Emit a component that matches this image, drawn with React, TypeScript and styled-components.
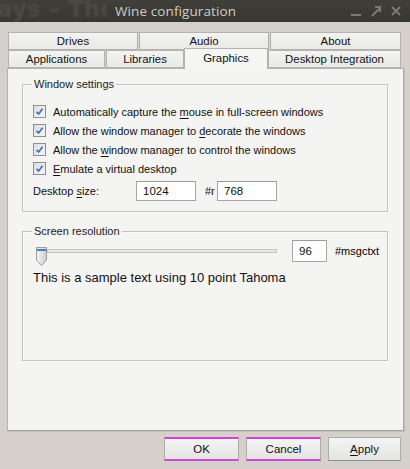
import React from "react";
import styled, { createGlobalStyle } from "styled-components";

const Global = createGlobalStyle`
  html, body { margin: 0; padding: 0; background: #d5d1ca; }
  body { font-family: "Liberation Sans", Arial, sans-serif; font-size: 12px; color: #000; }
  * { box-sizing: border-box; }
`;

const Window = styled.div`
  width: 410px;
  height: 469px;
  display: flex;
  flex-direction: column;
  background: #d5d1ca;
  overflow: hidden;
`;

const TitleBar = styled.div`
  position: relative;
  height: 22px;
  flex: none;
  display: flex;
  align-items: center;
  justify-content: flex-start;
  padding-left: 115px;
  background: linear-gradient(#403f3b, #37362f);
  overflow: hidden;
`;

const Ghost = styled.div`
  position: absolute;
  left: -3px;
  top: -4px;
  width: 110px;
  overflow: hidden;
  white-space: nowrap;
  font-family: "DejaVu Sans", sans-serif;
  font-weight: bold;
  font-size: 23px;
  color: #4f4943;
  filter: blur(0.8px);
`;

const Title = styled.div`
  position: relative;
  font-family: "Open Sans", "Noto Sans", sans-serif;
  font-size: 13.5px;
  color: #cfcdc8;
  letter-spacing: 0.1px;
`;

const Controls = styled.div`
  position: absolute;
  right: 8px;
  top: 4px;
  display: flex;
  gap: 8px;
  align-items: center;
`;

const Body = styled.div`
  flex: 1;
  display: flex;
  flex-direction: column;
  padding: 10px 6px 0 7px;
`;

const TabRow = styled.div`
  display: flex;
  gap: ${(p: { $gap?: number }) => p.$gap ?? 1}px;
  height: 18px;
  margin-left: 1px;
  align-items: flex-end;
`;

const Tab = styled.div<{ $w: number; $sel?: boolean }>`
  width: ${(p) => p.$w}px;
  height: ${(p) => (p.$sel ? 21 : 18)}px;
  margin-bottom: ${(p) => (p.$sel ? -1 : 0)}px;
  position: relative;
  z-index: ${(p) => (p.$sel ? 2 : 0)};
  border: 1px solid #b4b3b0;
  border-bottom: ${(p) => (p.$sel ? "none" : "1px solid #b4b3b0")};
  background: ${(p) =>
    p.$sel ? "#f5f5f3" : "linear-gradient(#f3f3f2, #e9e9e7)"};
  display: flex;
  align-items: center;
  justify-content: center;
  padding-bottom: ${(p) => (p.$sel ? 3 : 0)}px;
  font-size: 11.4px;
  color: #111;
`;

const Panel = styled.div`
  position: relative;
  z-index: 1;
  height: 363px;
  background: #f4f4f2;
  border: 1px solid #b4b3b0;
  border-right-color: #a9a8a5;
  border-bottom-color: #a3a29f;
  box-shadow: 1px 1px 0 #c3c0ba;
  padding: 15px 15px 0 14px;
  display: flex;
  flex-direction: column;
  gap: 19px;
`;

const Group = styled.div<{ $h: number }>`
  position: relative;
  height: ${(p) => p.$h}px;
  border: 1px solid #c2c2c0;
  box-shadow: inset 1px 1px 0 #fbfbfa, 1px 1px 0 #fbfbfa;
  display: flex;
  flex-direction: column;
`;

const Legend = styled.div`
  position: absolute;
  left: 9px;
  top: -8px;
  padding: 0 2px;
  background: #f4f4f2;
  font-size: 11px;
  line-height: 14px;
  color: #222;
`;

const CheckList = styled.div`
  display: flex;
  flex-direction: column;
  padding: 17px 0 0 10px;
`;

const CheckRow = styled.label`
  display: flex;
  align-items: center;
  gap: 7px;
  height: 19px;
  font-size: 11px;
  color: #111;
  white-space: nowrap;
`;

const Box = styled.span`
  width: 13px;
  height: 13px;
  flex: none;
  border: 1px solid #8e8f8f;
  background: linear-gradient(135deg, #dcdcdc, #f6f6f6);
  display: flex;
  align-items: center;
  justify-content: center;
`;

const Field = styled.div`
  display: flex;
  align-items: center;
  height: 20px;
  margin: 3px 0 0 10px;
  font-size: 11px;
  color: #111;
`;

const FieldLabel = styled.span<{ $w: number }>`
  width: ${(p) => p.$w}px;
  flex: none;
  white-space: nowrap;
  font-size: 11px;
`;

const TextBox = styled.div<{ $w: number; $h?: number }>`
  width: ${(p) => p.$w}px;
  height: ${(p) => p.$h ?? 20}px;
  flex: none;
  background: #fff;
  border: 1px solid #a6a6a6;
  border-top-color: #9a9a9a;
  padding-left: 6px;
  display: flex;
  align-items: center;
  font-size: 11.5px;
  color: #111;
`;

const SliderRow = styled.div`
  display: flex;
  align-items: center;
  height: 22px;
  margin-top: 8px;
  padding-left: 13px;
`;

const Track = styled.div`
  width: 231px;
  height: 4px;
  border: 1px solid #c3c3c3;
  background: #e9e9e9;
  margin-right: 15px;
`;

const Thumb = styled.svg`
  flex: none;
  margin-top: 10px;
`;

const Sample = styled.div`
  margin: 8px 0 0 10px;
  font-size: 13px;
  color: #111;
`;

const Footer = styled.div`
  height: 38px;
  flex: none;
  display: flex;
  justify-content: flex-end;
  align-items: flex-start;
  gap: 7px;
  padding: 6px 3px 0 0;
`;

const Button = styled.div<{ $w: number; $focus?: boolean }>`
  width: ${(p) => p.$w}px;
  height: 24px;
  display: flex;
  align-items: center;
  justify-content: center;
  background: linear-gradient(#f4f4f4, #e4e4e3);
  border: 1px solid #acacac;
  border-top: ${(p) => (p.$focus ? "2px solid #d244d6" : "1px solid #acacac")};
  border-bottom: ${(p) => (p.$focus ? "2px solid #d244d6" : "1px solid #8f8f8f")};
  font-size: 11.5px;
  color: #111;
`;

const U = styled.span`
  text-decoration: underline;
  text-underline-offset: 2px;
`;

const Check = () => (
  <Box>
    <svg width="9" height="9" viewBox="0 0 9 9">
      <path d="M1.5 4.8 L3.6 7 L7.6 1.8" fill="none" stroke="#3b70c4" strokeWidth="1.7" />
    </svg>
  </Box>
);

export default function App() {
  return (
    <>
      <Global />
      <Window>
        <TitleBar>
          <Ghost>ays – The O</Ghost>
          <Title>Wine configuration</Title>
          <Controls>
            <svg width="12" height="14" viewBox="0 0 12 14">
              <rect x="1" y="10" width="10" height="2" fill="#7b7a76" />
            </svg>
            <svg width="12" height="14" viewBox="0 0 12 14">
              <path d="M2 12 L10 4 M5 3 L10 3 L10 8" fill="none" stroke="#7b7a76" strokeWidth="2" />
            </svg>
            <svg width="12" height="14" viewBox="0 0 12 14">
              <path d="M2 3 L10 11 M10 3 L2 11" fill="none" stroke="#7b7a76" strokeWidth="2" />
            </svg>
          </Controls>
        </TitleBar>
        <Body>
          <TabRow>
            <Tab $w={130}>Drives</Tab>
            <Tab $w={130}>Audio</Tab>
            <Tab $w={131}>About</Tab>
          </TabRow>
          <TabRow $gap={0}>
            <Tab $w={97}>Applications</Tab>
            <Tab $w={78} style={{ marginLeft: 1 }}>Libraries</Tab>
            <Tab $w={84} $sel>Graphics</Tab>
            <Tab $w={133}>Desktop Integration</Tab>
          </TabRow>
          <Panel>
            <Group $h={128}>
              <Legend>Window settings</Legend>
              <CheckList>
                <CheckRow>
                  <Check />
                  <span>
                    Automatically capture the <U>m</U>ouse in full-screen windows
                  </span>
                </CheckRow>
                <CheckRow>
                  <Check />
                  <span>
                    Allow the window manager to <U>d</U>ecorate the windows
                  </span>
                </CheckRow>
                <CheckRow>
                  <Check />
                  <span>
                    Allow the <U>w</U>indow manager to control the windows
                  </span>
                </CheckRow>
                <CheckRow>
                  <Check />
                  <span>
                    <U>E</U>mulate a virtual desktop
                  </span>
                </CheckRow>
              </CheckList>
              <Field>
                <FieldLabel $w={103}>
                  Desktop <U>s</U>ize:
                </FieldLabel>
                <TextBox $w={60}>1024</TextBox>
                <FieldLabel $w={21} style={{ paddingLeft: 9 }}>#r</FieldLabel>
                <TextBox $w={60}>768</TextBox>
              </Field>
            </Group>
            <Group $h={130}>
              <Legend>Screen resolution</Legend>
              <SliderRow>
                <Thumb width="11" height="19" viewBox="0 0 11 19">
                  <defs>
                    <linearGradient id="tg" x1="0" x2="1" y1="0" y2="0">
                      <stop offset="0" stopColor="#f4f4f4" />
                      <stop offset="1" stopColor="#cfcfcf" />
                    </linearGradient>
                  </defs>
                  <path d="M0.5 0.5 H10.5 V13 L5.5 18.5 L0.5 13 Z" fill="url(#tg)" stroke="#9a9a9a" />
                  <rect x="1" y="2" width="9" height="2" fill="#3d83d4" />
                </Thumb>
                <Track />
                <TextBox $w={35} $h={22}>96</TextBox>
                <FieldLabel $w={60} style={{ paddingLeft: 8 }}>#msgctxt</FieldLabel>
              </SliderRow>
              <Sample>This is a sample text using 10 point Tahoma</Sample>
            </Group>
          </Panel>
          <Footer>
            <Button $w={75} $focus>OK</Button>
            <Button $w={75} $focus>Cancel</Button>
            <Button $w={73}>
              <U>A</U>pply
            </Button>
          </Footer>
        </Body>
      </Window>
    </>
  );
}
